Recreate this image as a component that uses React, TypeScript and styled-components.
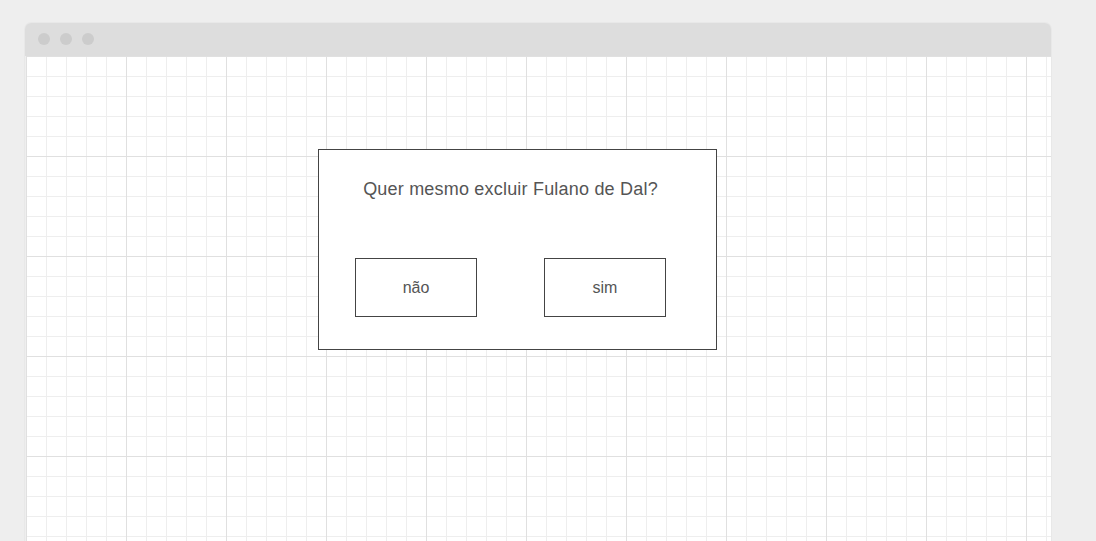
import styled, { createGlobalStyle } from 'styled-components'

const GlobalStyle = createGlobalStyle`
  html, body {
    margin: 0;
    padding: 0;
    height: 100%;
    overflow: hidden;
    background: #eeeeee;
    font-family: "Liberation Sans", Arial, sans-serif;
  }
  #root {
    height: 100%;
  }
`;

const PageStyled = styled.div`
  height: 100%;
  padding: 23px 0 0 25px;
  box-sizing: border-box;
  display: flex;
`;

const WindowStyled = styled.div`
  width: 1026px;
  display: flex;
  flex-direction: column;
  border-radius: 6px 6px 0 0;
  overflow: hidden;
  box-shadow: 0 0 0 1px rgba(0, 0, 0, 0.025);
`;

const TitleBarStyled = styled.div`
  height: 33px;
  flex: none;
  background: #dddddd;
  display: flex;
  align-items: center;
  gap: 10px;
  padding: 0 0 1px 13px;
  box-sizing: border-box;
`;

const DotStyled = styled.span`
  width: 12px;
  height: 12px;
  border-radius: 50%;
  background: #cccccc;
`;

const CanvasStyled = styled.div`
  flex: 1;
  margin-left: 1px;
  background-color: #ffffff;
  background-image:
    linear-gradient(#e0e0e0 1px, transparent 1px),
    linear-gradient(90deg, #e0e0e0 1px, transparent 1px),
    linear-gradient(#eeeeee 1px, transparent 1px),
    linear-gradient(90deg, #eeeeee 1px, transparent 1px);
  background-size: 100px 100px, 100px 100px, 20px 20px, 20px 20px;
  padding: 93px 0 0 292px;
  box-sizing: border-box;
`;

const DialogStyled = styled.div`
  width: 399px;
  height: 201px;
  box-sizing: border-box;
  border: 1px solid #444444;
  background: #ffffff;
  padding: 27px 50px 0 36px;
  display: flex;
  flex-direction: column;
`;

const QuestionStyled = styled.div`
  text-align: center;
  font-size: 18px;
  letter-spacing: 0.2px;
  line-height: 24px;
  color: #555555;
`;

const ActionsStyled = styled.div`
  display: flex;
  justify-content: space-between;
  margin-top: 57px;
`;

const ButtonStyled = styled.button`
  width: 122px;
  height: 59px;
  box-sizing: border-box;
  border: 1px solid #444444;
  background: #ffffff;
  color: #555555;
  font-family: "Liberation Sans", Arial, sans-serif;
  font-size: 16px;
  padding: 0;
  cursor: pointer;
`;

export default function App() {
  return (
    <>
      <GlobalStyle />
      <PageStyled>
        <WindowStyled>
          <TitleBarStyled>
            <DotStyled />
            <DotStyled />
            <DotStyled />
          </TitleBarStyled>
          <CanvasStyled>
            <DialogStyled>
              <QuestionStyled>Quer mesmo excluir Fulano de Dal?</QuestionStyled>
              <ActionsStyled>
                <ButtonStyled>não</ButtonStyled>
                <ButtonStyled>sim</ButtonStyled>
              </ActionsStyled>
            </DialogStyled>
          </CanvasStyled>
        </WindowStyled>
      </PageStyled>
    </>
  )
}
